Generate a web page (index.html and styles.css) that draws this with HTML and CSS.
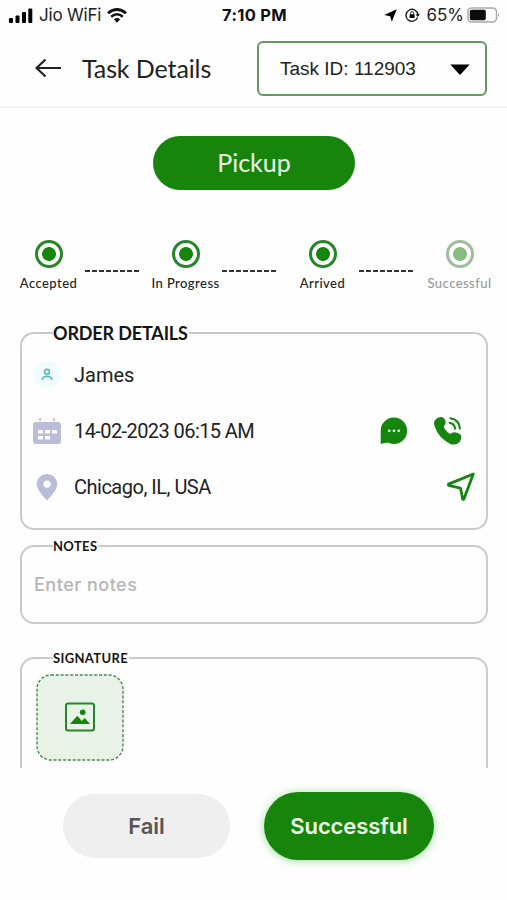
FILE: index.html
```html
<!DOCTYPE html>
<html lang="en">
<head>
	<meta charset="UTF-8">
	<title>Task Details</title>
	<link rel="stylesheet" href="styles.css">
</head>
<body>
	<div class="statusbar">
		<div class="carrier">
			<svg class="signal" width="24" height="15" viewBox="0 0 24 15">
				<rect x="0" y="10" width="4" height="5" rx="1"/>
				<rect x="6.5" y="7.5" width="4" height="7.5" rx="1"/>
				<rect x="13" y="4" width="4" height="11" rx="1"/>
				<rect x="19.3" y="0.5" width="4" height="14.5" rx="1"/>
			</svg>
			<span class="net">Jio WiFi</span>
			<svg class="wifi" width="20" height="15" viewBox="0 0 20 15">
				<path d="M1 5.3Q10 -2.3 19 5.3" fill="none" stroke="#111" stroke-width="2.7"/>
				<path d="M4.2 8.8Q10 3.8 15.8 8.8" fill="none" stroke="#111" stroke-width="2.5"/>
				<path d="M6.8 11.3Q10 8.6 13.2 11.3L10 14.8z" fill="#111"/>
			</svg>
		</div>
		<div class="time">7:10 PM</div>
		<div class="power">
			<svg width="13" height="13" viewBox="0 0 13 13"><path d="M12.8 0.2L7.8 12.8L6.2 7.2L0.2 6z"/></svg>
			<svg class="lock" width="15" height="14" viewBox="0 0 15 14">
				<path d="M12.6 9.6A6 6 0 1 1 13 6.6" fill="none" stroke="#222" stroke-width="1.4"/>
				<path d="M10.8 6.2h4l-2 2.8z"/>
				<rect x="4.6" y="6.3" width="5" height="3.8" rx=".5"/>
				<path d="M5.6 6.6V5.2a1.5 1.5 0 0 1 3 0v1.4" fill="none" stroke="#222"/>
			</svg>
			<span class="percent">65%</span>
			<svg width="33" height="16" viewBox="0 0 33 16">
				<rect x=".9" y=".9" width="28.6" height="14.2" rx="4" fill="none" stroke="#a9a9a9" stroke-width="1.5"/>
				<rect x="2.8" y="2.8" width="16" height="10.4" rx="1.8" fill="#0b0b0b"/>
				<path d="M31 5.5q1.6 2.5 0 5z" fill="#999"/>
			</svg>
		</div>
	</div>

	<div class="header">
		<svg class="back" width="27" height="20" viewBox="0 0 27 20"><path d="M10.5 1.5L1.5 10l9 8.5M1.5 10H26" fill="none" stroke="#222" stroke-width="2.2"/></svg>
		<h1 class="title">Task Details</h1>
		<div class="select">
			<span>Task ID: 112903</span>
			<svg width="20" height="11" viewBox="0 0 20 11"><path d="M.3 .5h19.4L11 10q-1 1-2 0z"/></svg>
		</div>
	</div>

	<div class="content">
		<div class="pickup">Pickup</div>

		<div class="steps">
			<div class="step"><i class="dot"></i><span>Accepted</span></div>
			<svg class="line" width="54" height="2"><path d="M0 1h54" stroke="#333" stroke-width="2" stroke-dasharray="5 2"/></svg>
			<div class="step"><i class="dot"></i><span>In Progress</span></div>
			<svg class="line" width="54" height="2"><path d="M0 1h54" stroke="#333" stroke-width="2" stroke-dasharray="5 2"/></svg>
			<div class="step"><i class="dot"></i><span>Arrived</span></div>
			<svg class="line" width="54" height="2"><path d="M0 1h54" stroke="#333" stroke-width="2" stroke-dasharray="5 2"/></svg>
			<div class="step off"><i class="dot"></i><span>Successful</span></div>
		</div>

		<fieldset class="card order">
			<legend>ORDER DETAILS</legend>
			<div class="row">
				<span class="icon">
					<svg width="28" height="28" viewBox="0 0 28 28">
						<circle cx="14" cy="14" r="13.5" fill="#effbfc"/>
						<circle cx="14" cy="10.8" r="2.5" fill="none" stroke="#55b4be" stroke-width="1.5"/>
						<path d="M9.2 19q.2-3.8 4.8-3.8t4.8 3.8" fill="none" stroke="#55b4be" stroke-width="1.5"/>
					</svg>
				</span>
				<span class="text">James</span>
			</div>
			<div class="row">
				<span class="icon">
					<svg width="28" height="28" viewBox="0 0 28 28">
						<path d="M7 1v3M21 1v3" stroke="#bcc0d8" stroke-width="1.8"/>
						<rect x="0" y="5" width="28" height="22" rx="3" fill="#b9bdd7"/>
						<path d="M5 13h5v3.6H5zM12 13h5v3.6h-5zM19 13h5v3.6h-5zM5 19h5v3.6H5zM12 19h5v3.6h-5z" fill="#fff"/>
					</svg>
				</span>
				<span class="text date">14-02-2023 06:15 AM</span>
				<svg class="chat" width="28" height="28" viewBox="0 0 28 28">
					<path d="M.7 27V14A13.2 13.2 0 1 1 14 27q-3.8 0-6.4-1.4Q5 26 .7 27z" fill="#16850d"/>
					<g fill="#dff5dc"><circle cx="9.3" cy="13.8" r="1.4"/><circle cx="14" cy="13.8" r="1.4"/><circle cx="18.7" cy="13.8" r="1.4"/></g>
				</svg>
				<svg class="phone" width="30" height="30" viewBox="0 0 30 30">
					<path d="M3.2 2.7Q7.5-.7 11 2.3q2.4 2.6 1.2 5.6-1.8 2.8-1 4.2 2.6 4.5 6 6 1.8-1.8 4.2-1.9 4 0 6.5 2.8 1.2 3-1.1 6.7-3 3.7-8.4 2.7Q5.6 23 1.5 10.1.1 5.2 3.2 2.7z" fill="#16850d"/>
					<path d="M16.6 6.7q5 1 5.5 6M17.4 2.2q8.8 1.3 9.5 10.3" fill="none" stroke="#16850d" stroke-width="2.1" stroke-linecap="round"/>
				</svg>
			</div>
			<div class="row">
				<span class="icon">
					<svg width="22" height="28" viewBox="0 0 22 28">
						<path d="M11 1A10.3 10.3 0 0 0 .6 11.3Q.6 17 11 27.5 21.4 17 21.4 11.3A10.3 10.3 0 0 0 11 1z" fill="#b9bdd7"/>
						<circle cx="11" cy="11.2" r="3.6" fill="#fff"/>
					</svg>
				</span>
				<span class="text place">Chicago, IL, USA</span>
				<svg class="nav" width="30" height="30" viewBox="0 0 30 30"><path d="M27.3 2L2.5 12.1v1.2l12 2.8 2.2 11.2h1.1z" fill="none" stroke="#16850d" stroke-width="2.8" stroke-linejoin="round"/></svg>
			</div>
		</fieldset>

		<fieldset class="card notes">
			<legend>NOTES</legend>
			<div class="placeholder">Enter notes</div>
		</fieldset>

		<fieldset class="card signature">
			<legend>SIGNATURE</legend>
			<div class="upload">
				<svg width="88" height="87" viewBox="0 0 88 87">
					<rect x="1" y="1" width="86" height="85" rx="14" fill="#e8f2e6" stroke="#468a44" stroke-width="1.4" stroke-dasharray="3 1.8"/>
					<rect x="30" y="29.5" width="28" height="27" rx="2" fill="none" stroke="#27852a" stroke-width="2"/>
					<circle cx="46.7" cy="38.2" r="2.8" fill="#16850d"/>
					<path d="M34 50l7.3-8.2 4.5 5.2 3-3L54 50z" fill="#16850d"/>
				</svg>
			</div>
		</fieldset>
	</div>

	<div class="footer">
		<div class="btn fail">Fail</div>
		<div class="btn success">Successful</div>
	</div>
</body>
</html>
```
FILE: styles.css
```css
*{margin:0;padding:0;box-sizing:border-box;}
body{
	height:900px;
	overflow:hidden;
	display:flex;
	flex-direction:column;
	background:#fefefe;
	color:#222;
	font-family:Lato, "Liberation Sans", sans-serif;
}
svg{display:block;flex:none;}
span,.time,.title,.pickup,.btn,legend{white-space:nowrap;}

.statusbar{
	height:30px;
	flex:none;
	display:grid;
	grid-template-columns:1fr auto 1fr;
	align-items:center;
	padding:0 7px 0 9px;
	font-family:Inter, sans-serif;
	font-size:17px;
	color:#222;
}
.carrier,.power{
	display:flex;
	align-items:center;
}
.net{
	width:62px;
	margin:0 6px;
	letter-spacing:-0.2px;
}
.time{
	font-size:16.5px;
	font-weight:700;
	letter-spacing:0.3px;
	color:#111;
}
.power{justify-content:flex-end;}
.lock{margin:0 6px 0 8px;}
.percent{margin-right:3px;}

.header{
	height:78px;
	flex:none;
	display:flex;
	align-items:center;
	padding:0 20px 0 35px;
	border-bottom:2px solid #f2f2f2;
}
.title{
	margin-left:20px;
	font-size:25px;
	font-weight:400;
	line-height:30px;
	letter-spacing:-0.1px;
}
.select{
	width:230px;
	height:55px;
	margin-left:auto;
	padding:2px 15px 0 21px;
	display:flex;
	align-items:center;
	justify-content:space-between;
	border:2px solid #629b5d;
	border-radius:6px;
	font-family:"Liberation Sans", Arial, sans-serif;
	font-size:19px;
}

.content{
	height:660px;
	flex:none;
	overflow:hidden;
	padding:28px 19px 0 20px;
}
.pickup{
	width:202px;
	height:54px;
	margin-left:133px;
	border-radius:27px;
	background:#17850c;
	color:#eefbe9;
	font-size:25px;
	line-height:52px;
	text-align:center;
}
.steps{
	height:56px;
	margin:50px -19px 0 -8px;
	display:flex;
	align-items:flex-start;
}
.step{
	width:73px;
	display:flex;
	flex-direction:column;
	align-items:center;
	font-size:13px;
	font-weight:500;
	line-height:16px;
	letter-spacing:0.45px;
}
.dot{
	width:28px;
	height:28px;
	margin-bottom:7px;
	border:3px solid #25862a;
	border-radius:50%;
	background:radial-gradient(circle, #16850d 6.5px, #fff 7.3px);
}
.off{color:#999;}
.off .dot{
	border-color:#9fbc9f;
	background:radial-gradient(circle, #85bd80 6.5px, #fff 7.3px);
}
.line{margin:30px 10px 0 0;}

.card{
	min-width:0;
	border:2px solid #cbcbcb;
	border-radius:14px;
}
.card legend{
	margin-left:31px;
	padding:0 1px 0 0;
	font-size:13px;
	font-weight:700;
	line-height:16px;
	letter-spacing:0.35px;
	color:#151515;
}
.order{
	height:208px;
	margin-top:26px;
}
.order legend{
	font-size:18px;
	line-height:22px;
	letter-spacing:-0.15px;
}
.row{
	height:56px;
	display:flex;
	align-items:center;
	padding-right:10px;
}
.order .row:nth-of-type(1){margin-top:3px;}
.icon{
	width:52px;
	padding-right:2px;
	display:flex;
	justify-content:center;
}
.text{
	font-family:Roboto, sans-serif;
	font-size:20px;
}
.date{letter-spacing:-0.58px;}
.place{letter-spacing:-0.5px;}
.chat{margin-left:auto;}
.phone{margin:0 13px 0 25px;}
.nav{margin-left:auto;}

.notes{
	height:86px;
	margin-top:8px;
}
.placeholder{
	padding:19px 0 0 12px;
	font-family:Inter, sans-serif;
	font-size:18px;
	font-weight:500;
	line-height:24px;
	letter-spacing:0.5px;
	color:#b5b5b5;
}
.signature{
	height:180px;
	margin-top:26px;
}
.upload{padding:8px 0 0 14px;}

.footer{
	flex:1;
	display:flex;
	align-items:flex-start;
	gap:34px;
	padding:24px 0 0 63px;
	font-family:Inter, sans-serif;
	font-size:22px;
	font-weight:600;
	text-align:center;
}
.fail{
	width:167px;
	height:64px;
	margin-top:2px;
	border-radius:32px;
	background:#efefef;
	color:#555;
	line-height:64px;
}
.success{
	width:170px;
	height:68px;
	border-radius:34px;
	background:#17850c;
	color:#effbea;
	line-height:68px;
	letter-spacing:-0.1px;
	box-shadow:0 1px 8px rgba(60,190,60,0.5);
}
```
